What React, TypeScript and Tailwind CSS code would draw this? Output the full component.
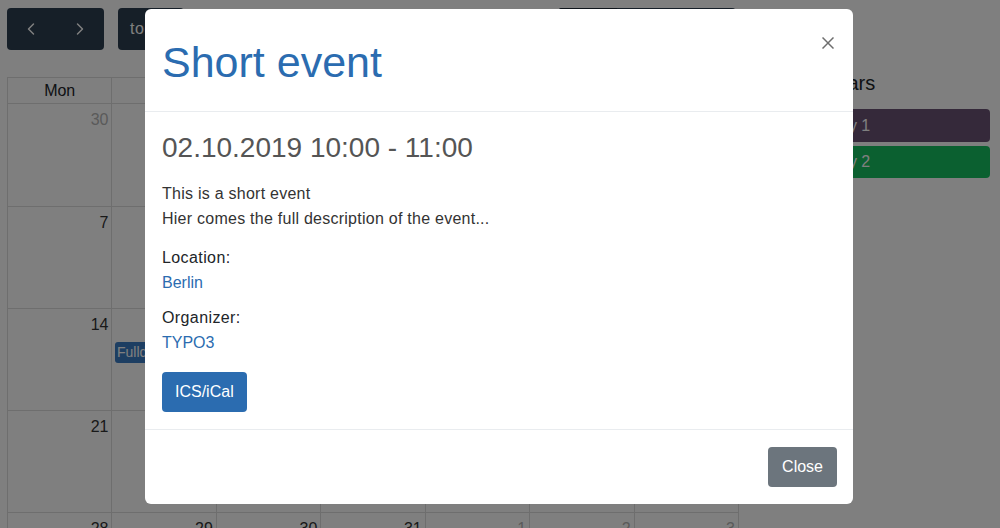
import React from 'react';
import { ChevronLeft, ChevronRight } from 'lucide-react';

const dayNames = ['Mon', 'Tue', 'Wed', 'Thu', 'Fri', 'Sat', 'Sun'];

// October 2019, Monday first
const weeks: { day: number; other: boolean }[][] = [
  [30, 1, 2, 3, 4, 5, 6].map((d, i) => ({ day: d, other: i === 0 })),
  [7, 8, 9, 10, 11, 12, 13].map((d) => ({ day: d, other: false })),
  [14, 15, 16, 17, 18, 19, 20].map((d) => ({ day: d, other: false })),
  [21, 22, 23, 24, 25, 26, 27].map((d) => ({ day: d, other: false })),
  [28, 29, 30, 31, 1, 2, 3].map((d, i) => ({ day: d, other: i > 3 })),
];

function Toolbar() {
  return (
    <div className="flex items-center justify-between pl-[7px] pr-[3px] pt-[8px] mb-[27px]">
      <div className="flex items-center">
        <div className="flex h-[42px] w-[97px] rounded-[4px] bg-[#2c3e50] text-white">
          <button type="button" className="flex flex-1 items-center justify-center">
            <ChevronLeft size={20} strokeWidth={1.75} />
          </button>
          <button type="button" className="flex flex-1 items-center justify-center">
            <ChevronRight size={20} strokeWidth={1.75} />
          </button>
        </div>
        <button type="button" className="ml-[14px] h-[42px] rounded-[4px] bg-[#2c3e50] px-3 text-[16px] tracking-[0.6px] text-white">
          today
        </button>
      </div>
      <h2 className="text-[28px] text-[#212529]">October 2019</h2>
      <div className="flex h-[42px] w-[178px] overflow-hidden rounded-[4px] bg-[#2c3e50] text-[16px] text-white">
        <span className="flex flex-1 items-center justify-center bg-[#1e2b37]">month</span>
        <span className="flex flex-1 items-center justify-center">week</span>
        <span className="flex flex-1 items-center justify-center">day</span>
      </div>
    </div>
  );
}

function Calendar() {
  return (
    <div className="ml-[7px] w-[732px] border-l border-t border-[#dddddd]">
      <div className="grid grid-cols-7">
        {dayNames.map((n) => (
          <div key={n} className="h-[26px] border-b border-r border-[#dddddd] text-center text-[16px] leading-[25px] text-[#212529]">
            {n}
          </div>
        ))}
      </div>
      {weeks.map((week, wi) => (
        <div key={wi} className={`relative grid grid-cols-7 ${wi === 0 ? 'h-[103px]' : 'h-[102px]'}`}>
          {week.map((c, ci) => (
            <div key={ci} className="border-b border-r border-[#dddddd] pr-[3px] pt-[4px] text-right text-[16px] leading-[24px]">
              <span className={c.other ? 'text-[#b5b5b5]' : 'text-[#333333]'}>{c.day}</span>
            </div>
          ))}
          {wi === 2 && (
            <div className="absolute left-[107px] top-[33px] h-[21px] w-[310px] rounded-[3px] bg-[#3b7cc4] px-[2px] text-[14px] leading-[21px] text-white">
              Fullday event
            </div>
          )}
        </div>
      ))}
    </div>
  );
}

function Sidebar() {
  return (
    <div className="ml-[45px] w-[206px] pt-[71px]">
      <h4 className="mb-[14px] text-[20px] leading-[24px] text-[#212529]">Calendars</h4>
      <div className="flex flex-col gap-[4px]">
        <div className="h-[33px] rounded-[4px] bg-[#6a5274] px-2 text-[16px] leading-[33px] text-white">Category 1</div>
        <div className="h-[32px] rounded-[4px] bg-[#16c060] px-2 text-[16px] leading-[32px] text-white">Category 2</div>
      </div>
    </div>
  );
}

function EventModal() {
  return (
    <div className="fixed inset-0 flex justify-center bg-black/50 pr-[2px]">
      <div className="mt-[9px] h-fit w-[708px] rounded-[6px] bg-white">
        <div className="flex items-start justify-between border-b border-[#e9ecef] pb-[23px] pl-[17px] pr-4 pt-[27px]">
          <h1 className="text-[43px] leading-[52px] text-[#2b6cb0]">Short event</h1>
          <button type="button" className="mr-[3px] mt-[1px] text-[#6e6e6e]">
            <svg width="12" height="12" viewBox="0 0 12 12" fill="none" stroke="currentColor" strokeWidth="1.5">
              <line x1="0.5" y1="0.5" x2="11.5" y2="11.5" />
              <line x1="11.5" y1="0.5" x2="0.5" y2="11.5" />
            </svg>
          </button>
        </div>

        <div className="pb-[17px] pl-[17px] pr-4 pt-[19px]">
          <h3 className="mb-[16px] text-[28px] leading-[34px] text-[#555555]">02.10.2019 10:00 - 11:00</h3>
          <p className="mb-[14px] text-[16px] leading-[25px] tracking-[0.25px] text-[#333333]">
            This is a short event
            <br />
            Hier comes the full description of the event...
          </p>
          <div className="text-[16px] leading-[25px] tracking-[0.4px] text-[#212529]">Location:</div>
          <div className="mb-[10px] text-[16px] leading-[25px] text-[#2b6cb0]">Berlin</div>
          <div className="text-[16px] leading-[25px] tracking-[0.4px] text-[#212529]">Organizer:</div>
          <div className="text-[16px] leading-[25px] text-[#2b6cb0]">TYPO3</div>
          <button type="button" className="mt-[17px] h-[40px] rounded-[4px] bg-[#2b6cb0] px-[13px] text-[16px] text-white">
            ICS/iCal
          </button>
        </div>

        <div className="flex justify-end border-t border-[#e9ecef] pb-[17px] pl-4 pr-4 pt-[17px]">
          <button type="button" className="h-[40px] rounded-[4px] bg-[#6c757d] px-[14px] text-[16px] text-white">
            Close
          </button>
        </div>
      </div>
    </div>
  );
}

export default function App() {
  return (
    <div className="relative min-h-[528px] bg-white font-['Liberation_Sans',Arial,sans-serif]">
      <div className="flex">
        <div className="w-[739px]">
          <Toolbar />
          <Calendar />
        </div>
        <Sidebar />
      </div>
      <EventModal />
    </div>
  );
}
